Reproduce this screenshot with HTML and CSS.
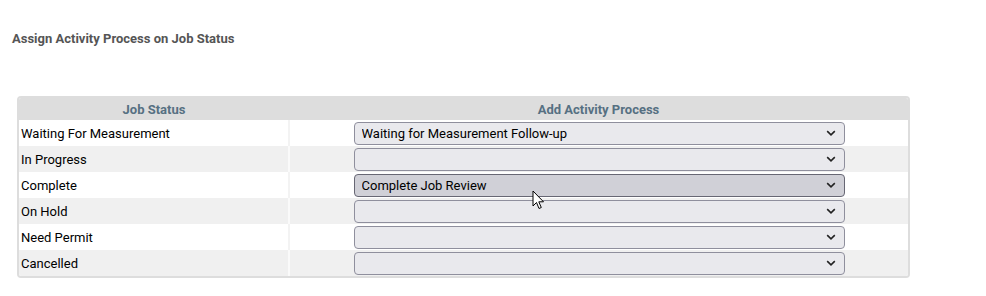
FILE: index.html
```html
<!DOCTYPE html>
<html lang="en">
<head>
    <meta charset="UTF-8">
    <meta name="viewport" content="width=device-width, initial-scale=1.0">
    <title>Assign Activity Process</title>
    <link rel="stylesheet" href="styles.css">
</head>
<body>
    <div class="page">
        <h3 class="section-title">Assign Activity Process on Job Status</h3>

        <div class="status-box">
            <table class="status-table">
                <thead>
                    <tr>
                        <th class="col-status">Job Status</th>
                        <th class="col-process">Add Activity Process</th>
                    </tr>
                </thead>
                <tbody>
                    <tr>
                        <td>Waiting For Measurement</td>
                        <td class="col-process">
                            <select class="process-select">
                                <option>Waiting for Measurement Follow-up</option>
                            </select>
                        </td>
                    </tr>
                    <tr>
                        <td>In Progress</td>
                        <td class="col-process">
                            <select class="process-select"><option></option></select>
                        </td>
                    </tr>
                    <tr>
                        <td>Complete</td>
                        <td class="col-process">
                            <select class="process-select is-hover">
                                <option>Complete Job Review</option>
                            </select>
                        </td>
                    </tr>
                    <tr>
                        <td>On Hold</td>
                        <td class="col-process">
                            <select class="process-select"><option></option></select>
                        </td>
                    </tr>
                    <tr>
                        <td>Need Permit</td>
                        <td class="col-process">
                            <select class="process-select"><option></option></select>
                        </td>
                    </tr>
                    <tr>
                        <td>Cancelled</td>
                        <td class="col-process">
                            <select class="process-select"><option></option></select>
                        </td>
                    </tr>
                </tbody>
            </table>
        </div>

        <!-- mouse pointer over the hovered select -->
        <svg class="pointer" width="13" height="20" viewBox="0 0 13 20">
            <path d="M1 1 L1 16 L4.5 12.5 L7 18.5 L9.3 17.5 L6.8 11.8 L11.5 11.8 Z" fill="#fff" stroke="#000" stroke-width="1" stroke-linejoin="round"/>
        </svg>
    </div>
</body>
</html>
```

FILE: styles.css
```css
* {
    margin: 0;
    padding: 0;
    box-sizing: border-box;
}

body {
    font-family: Roboto, 'Liberation Sans', Arial, sans-serif;
    background: #fff;
    color: #000;
}

.page {
    position: relative;
    padding: 32px 0 0 17px;
}

.section-title {
    margin-left: -5px;
    font-size: 13px;
    font-weight: 700;
    color: #555;
    line-height: 14px;
}

.status-box {
    width: 893px;
    margin-top: 50px;
    border: 2px solid #dddddd;
    border-radius: 4px;
    overflow: hidden;
}

.status-table {
    width: 100%;
    border-collapse: collapse;
    font-size: 13px;
}

.status-table th {
    height: 22px;
    background: #dddddd;
    color: #567082;
    font-size: 13px;
    font-weight: 700;
    text-align: center;
}

.col-status {
    width: 270px;
}

.status-table td {
    height: 26px;
    padding: 0 0 0 2px;
    vertical-align: middle;
}

.status-table td.col-process {
    border-left: 2px solid #f3f3f3;
    text-align: center;
    padding: 0;
}

.status-table tbody tr:nth-child(even) td {
    background: #f0f0f0;
}

.status-table tbody tr:nth-child(even) td.col-process {
    border-left-color: #fafafa;
}

.process-select {
    -webkit-appearance: none;
    appearance: none;
    display: block;
    width: 491px;
    height: 23px;
    margin: 0 auto;
    padding: 0 24px 0 7px;
    font-family: Roboto, 'Liberation Sans', Arial, sans-serif;
    font-size: 13px;
    color: #000;
    text-align: left;
    background-color: #e9e9ed;
    background-image: url("data:image/svg+xml,%3Csvg xmlns='http://www.w3.org/2000/svg' width='10' height='6' viewBox='0 0 10 6'%3E%3Cpath d='M1.2 1.2 L5 4.8 L8.8 1.2' fill='none' stroke='%23222' stroke-width='1.6'/%3E%3C/svg%3E");
    background-repeat: no-repeat;
    background-position: right 8px center;
    border: 1px solid #8f8f9d;
    border-radius: 4px;
}

.process-select.is-hover {
    background-color: #d0d0d7;
    border-color: #676774;
}

.pointer {
    position: absolute;
    left: 532px;
    top: 190px;
}
```
